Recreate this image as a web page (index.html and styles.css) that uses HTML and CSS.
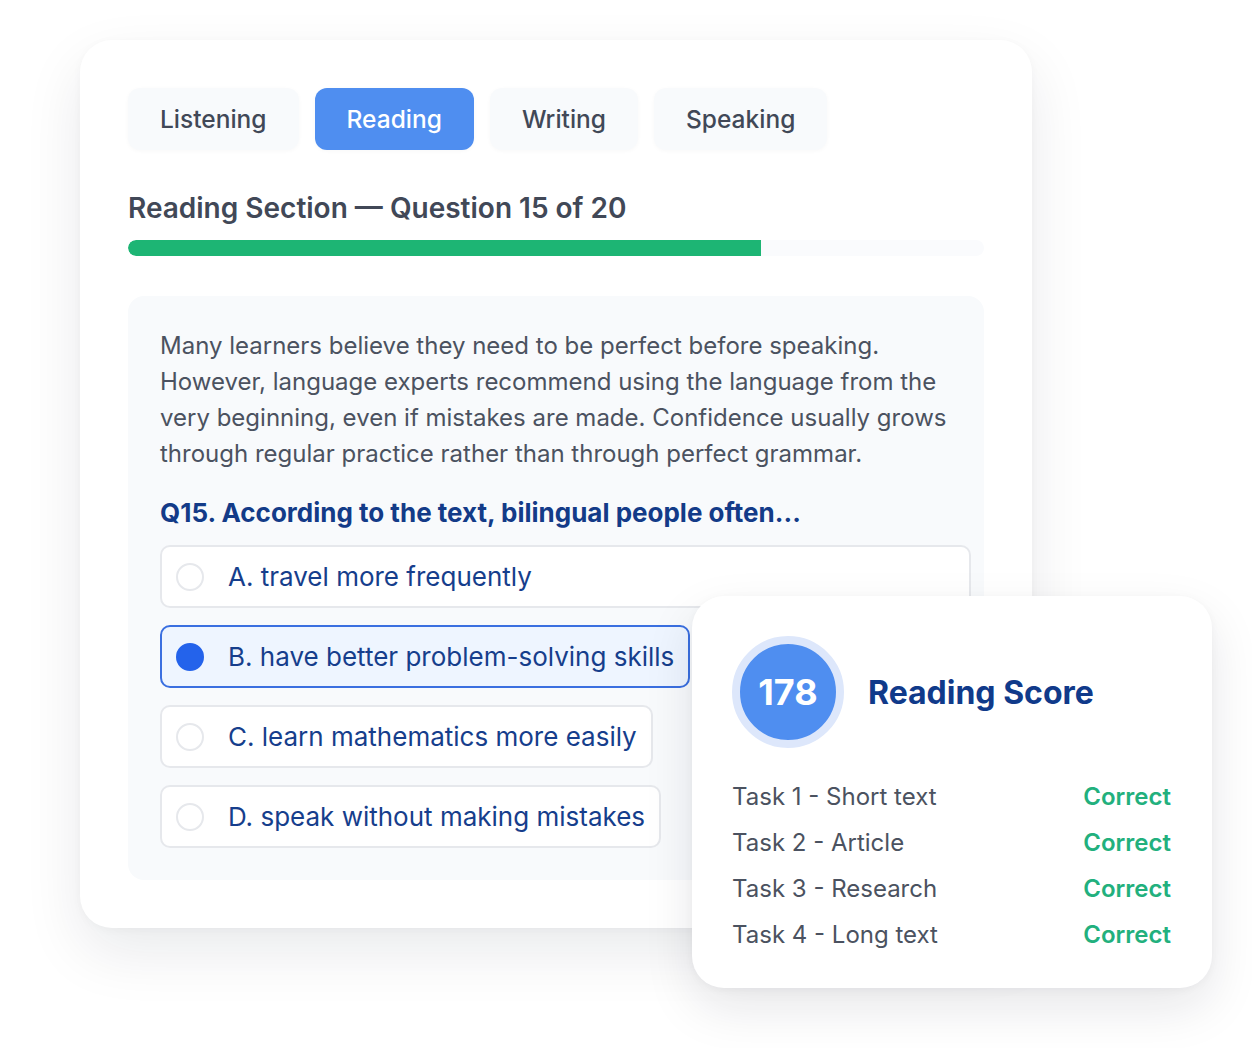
FILE: index.html
```html
<!DOCTYPE html>
<html lang="en">
<head>
    <meta charset="UTF-8">
    <meta name="viewport" content="width=device-width, initial-scale=1.0">
    <title>Reading Section</title>
    <link rel="stylesheet" href="styles.css">
</head>
<body>
<div class="stage">
    <div class="exam-card">
        <div class="tabs">
            <div class="tab">Listening</div>
            <div class="tab active">Reading</div>
            <div class="tab">Writing</div>
            <div class="tab">Speaking</div>
        </div>

        <h2 class="section-title">Reading Section — Question 15 of 20</h2>
        <div class="progress">
            <div class="progress-fill" style="width: 74%"></div>
        </div>

        <div class="passage">
            <p class="passage-text">Many learners believe they need to be perfect before speaking. However, language experts recommend using the language from the very beginning, even if mistakes are made. Confidence usually grows through regular practice rather than through perfect grammar.</p>
            <div class="question">Q15. According to the text, bilingual people often...</div>
            <div class="options">
                <div class="option option-wide"><span class="radio"></span>A. travel more frequently</div>
                <div class="option selected"><span class="radio"></span>B. have better problem-solving skills</div>
                <div class="option"><span class="radio"></span>C. learn mathematics more easily</div>
                <div class="option"><span class="radio"></span>D. speak without making mistakes</div>
            </div>
        </div>
    </div>

    <div class="score-card">
        <div class="score-head">
            <div class="score-badge">178</div>
            <div class="score-title">Reading Score</div>
        </div>
        <div class="task-list">
            <div class="task-row"><span>Task 1 - Short text</span><span class="ok">Correct</span></div>
            <div class="task-row"><span>Task 2 - Article</span><span class="ok">Correct</span></div>
            <div class="task-row"><span>Task 3 - Research</span><span class="ok">Correct</span></div>
            <div class="task-row"><span>Task 4 - Long text</span><span class="ok">Correct</span></div>
        </div>
    </div>
</div>
</body>
</html>
```

FILE: styles.css
```css
body {
    font-family: 'Inter', 'Noto Sans', sans-serif;
    background-color: #ffffff;
    margin: 0;
}

.stage {
    position: relative;
    width: 1252px;
    height: 1048px;
    padding: 40px 0 0 80px;
    box-sizing: border-box;
}

.exam-card {
    width: 952px;
    height: 888px;
    box-sizing: border-box;
    padding: 48px;
    background-color: white;
    border-radius: 32px;
    box-shadow: 0 24px 60px rgba(15, 23, 42, 0.09), 0 2px 10px rgba(15, 23, 42, 0.03);
}

.tabs {
    display: flex;
    gap: 16px;
}

.tab {
    height: 62px;
    padding: 0 32px;
    display: flex;
    align-items: center;
    font-size: 24.5px;
    font-weight: 500;
    color: #414857;
    background-color: #f8fafc;
    border-radius: 12px;
    box-shadow: 0 1px 4px rgba(15, 23, 42, 0.03);
}

.tab.active {
    background-color: #4f8ef0;
    color: white;
}

.section-title {
    margin: 38px 0 0;
    font-size: 28px;
    line-height: 40px;
    font-weight: 600;
    color: #414857;
}

.progress {
    margin-top: 12px;
    height: 16px;
    border-radius: 8px;
    background-color: #fafbfd;
    overflow: hidden;
}

.progress-fill {
    height: 100%;
    background-color: #1db574;
    border-radius: 8px 0 0 8px;
}

.passage {
    margin-top: 40px;
    height: 584px;
    box-sizing: border-box;
    padding: 32px 13px 32px 32px;
    background-color: #f8fafc;
    border-radius: 16px;
}

.passage-text {
    margin: 0;
    width: 800px;
    font-size: 24px;
    line-height: 36px;
    color: #4b5260;
}

.question {
    margin-top: 23px;
    font-size: 26px;
    line-height: 36px;
    font-weight: 700;
    color: #133b88;
}

.options {
    margin-top: 14px;
    display: flex;
    flex-direction: column;
    align-items: flex-start;
    gap: 17px;
}

.option {
    height: 63px;
    box-sizing: border-box;
    padding: 0 14px;
    display: flex;
    align-items: center;
    gap: 24px;
    font-size: 26px;
    color: #163e8c;
    background-color: white;
    border: 2px solid #e6e8ec;
    border-radius: 10px;
}

.option-wide {
    align-self: stretch;
}

.radio {
    width: 24px;
    height: 24px;
    border: 2px solid #e6e8ec;
    border-radius: 50%;
    flex-shrink: 0;
}

.option.selected {
    background-color: #eef5ff;
    border-color: #3a6fe0;
}

.option.selected .radio {
    background-color: #2463eb;
    border-color: #2463eb;
}

/* floating result card */
.score-card {
    position: absolute;
    left: 692px;
    top: 596px;
    width: 520px;
    height: 392px;
    box-sizing: border-box;
    padding: 40px 41px 40px 40px;
    background-color: white;
    border-radius: 32px;
    box-shadow: 0 20px 50px rgba(15, 23, 42, 0.10), 0 2px 8px rgba(15, 23, 42, 0.04);
}

.score-head {
    display: flex;
    align-items: center;
    gap: 24px;
}

.score-badge {
    width: 96px;
    height: 96px;
    border-radius: 50%;
    background-color: #4f8ef0;
    border: 8px solid #dde7fb;
    display: flex;
    align-items: center;
    justify-content: center;
    font-size: 36px;
    font-weight: 700;
    color: white;
}

.score-title {
    font-size: 32px;
    font-weight: 700;
    color: #103a8a;
}

.task-list {
    margin-top: 31px;
    display: flex;
    flex-direction: column;
    gap: 10px;
}

.task-row {
    display: flex;
    justify-content: space-between;
    font-size: 24px;
    line-height: 36px;
    color: #4b5260;
}

.ok {
    font-weight: 600;
    color: #22b07d;
}
```
